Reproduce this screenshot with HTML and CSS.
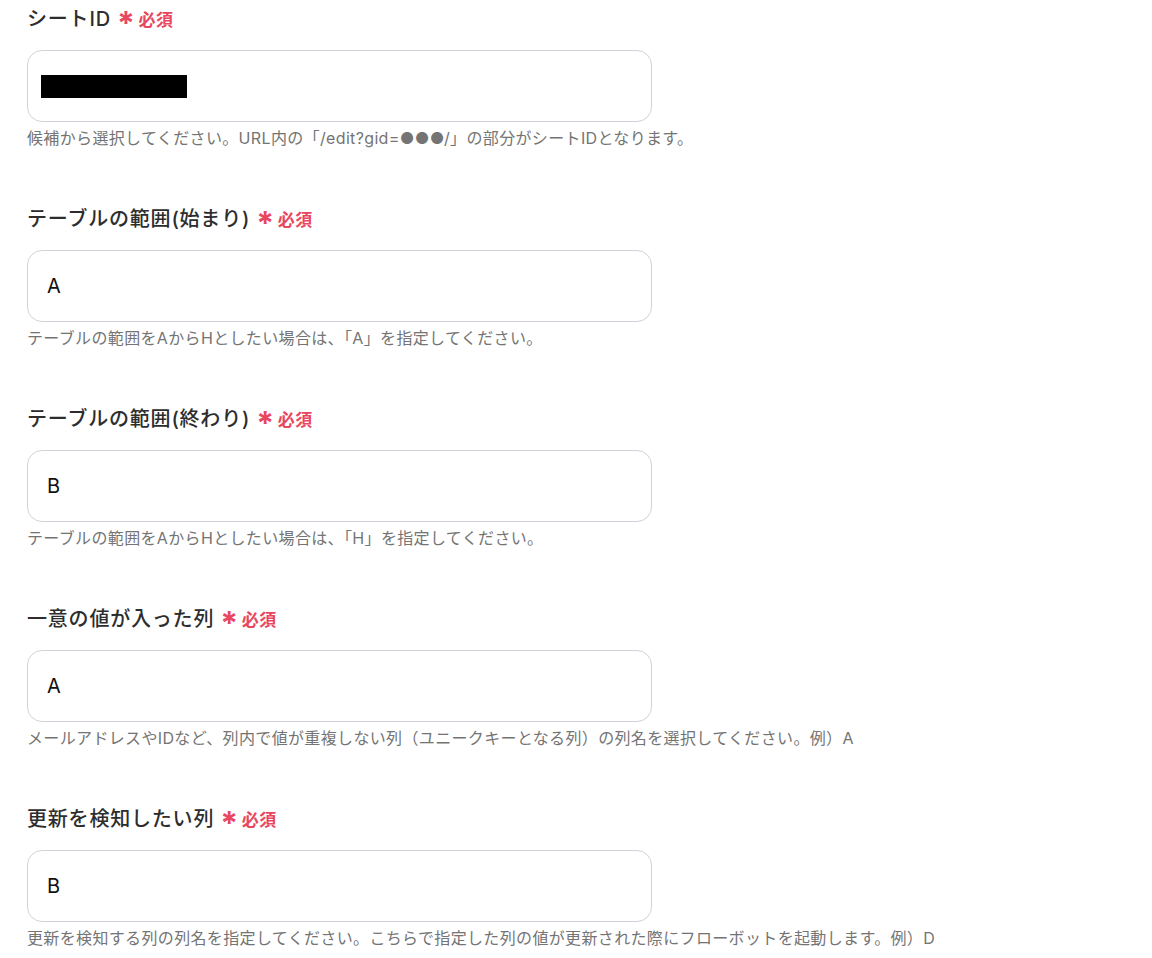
FILE: index.html
```html
<!DOCTYPE html>
<html lang="ja">
<head>
    <meta charset="UTF-8">
    <title>設定</title>
    <link rel="stylesheet" href="styles.css">
</head>
<body>

<div class="form">
    <div class="field">
        <div class="label">シートID <span class="req"><span class="star">*</span>必須</span></div>
        <div class="box"><span class="redacted"></span></div>
        <p class="help">候補から選択してください。URL内の「/edit?gid=●●●/」の部分がシートIDとなります。</p>
    </div>

    <div class="field">
        <div class="label">テーブルの範囲(始まり) <span class="req"><span class="star">*</span>必須</span></div>
        <div class="box">A</div>
        <p class="help">テーブルの範囲をAからHとしたい場合は、「A」を指定してください。</p>
    </div>

    <div class="field">
        <div class="label">テーブルの範囲(終わり) <span class="req"><span class="star">*</span>必須</span></div>
        <div class="box">B</div>
        <p class="help">テーブルの範囲をAからHとしたい場合は、「H」を指定してください。</p>
    </div>

    <div class="field">
        <div class="label">一意の値が入った列 <span class="req"><span class="star">*</span>必須</span></div>
        <div class="box">A</div>
        <p class="help">メールアドレスやIDなど、列内で値が重複しない列（ユニークキーとなる列）の列名を選択してください。例）A</p>
    </div>

    <div class="field">
        <div class="label">更新を検知したい列 <span class="req"><span class="star">*</span>必須</span></div>
        <div class="box">B</div>
        <p class="help">更新を検知する列の列名を指定してください。こちらで指定した列の値が更新された際にフローボットを起動します。例）D</p>
    </div>
</div>

</body>
</html>
```

FILE: styles.css
```css
body {
    margin: 0;
    padding: 0;
    background-color: #fff;
    color: #2d2d2d;
    font-family: "Inter", "Noto Sans CJK JP", sans-serif;
}

.form {
    padding: 5px 0 0 27px;
    width: 625px;
}

.field {
    height: 200px;
}

.field:last-child {
    height: auto;
}

.label {
    font-size: 20px;
    font-weight: 500;
    line-height: 28px;
    letter-spacing: 0.8px;
    margin-bottom: 16px;
    white-space: nowrap;
}

.req {
    color: #e8475f;
    font-size: 17px;
    font-weight: 700;
    letter-spacing: 0.5px;
}

.star {
    display: inline-block;
    font-size: 32px;
    line-height: 20px;
    vertical-align: -9px;
    margin-right: 3px;
}

.box {
    box-sizing: border-box;
    height: 72px;
    border: 1px solid #cfd2d8;
    border-radius: 15px;
    padding: 0 19px;
    display: flex;
    align-items: center;
    font-size: 20px;
    color: #111;
}

.redacted {
    display: block;
    width: 146px;
    height: 23px;
    background: #000;
    margin-left: -6px;
}

.help {
    margin: 5px 0 0;
    font-size: 16px;
    line-height: 22px;
    color: #747474;
    white-space: nowrap;
    letter-spacing: 0.35px;
}
```
